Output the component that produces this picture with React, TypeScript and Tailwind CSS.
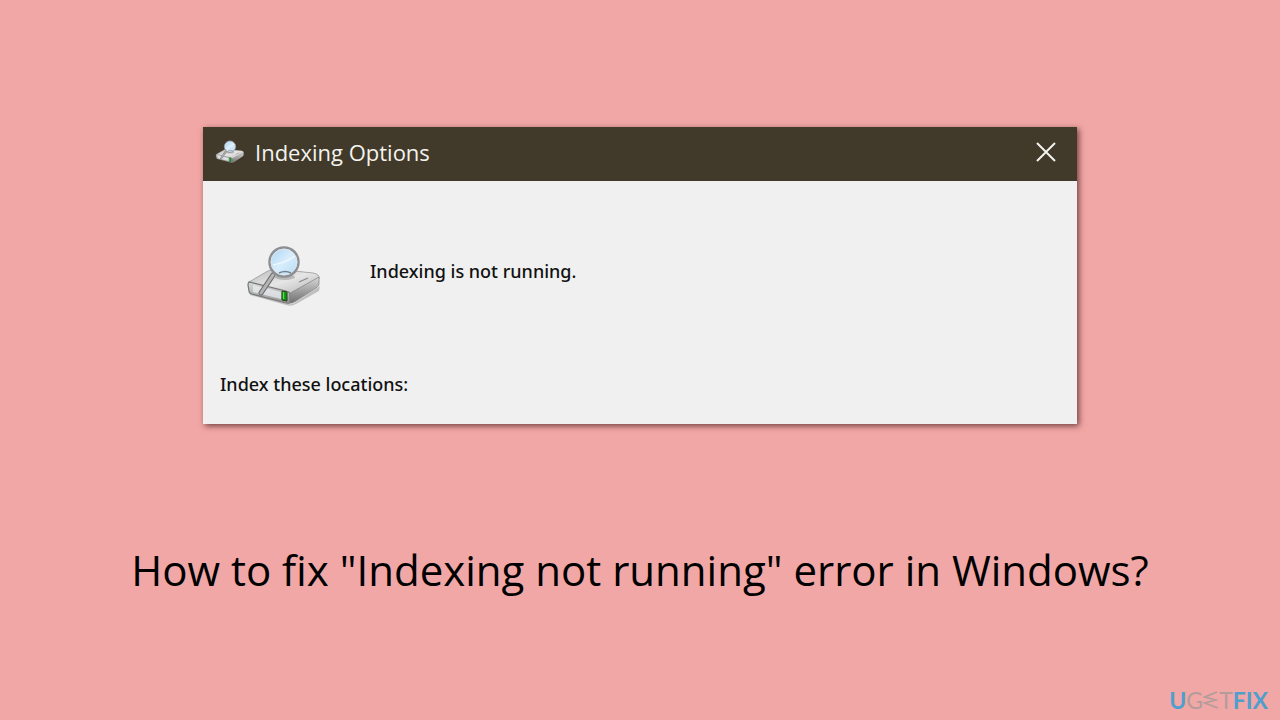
import { useState } from "react";

function DriveIcon({ className }: { className?: string }) {
  return (
    <svg viewBox="0 0 76 62" className={className} aria-hidden="true">
      <defs>
        <linearGradient id="driveTop" x1="0" y1="0" x2="1" y2="1">
          <stop offset="0" stopColor="#b9b9b9" />
          <stop offset="0.5" stopColor="#e6e6e6" />
          <stop offset="1" stopColor="#b4b4b4" />
        </linearGradient>
        <linearGradient id="driveFront" x1="0" y1="0" x2="0" y2="1">
          <stop offset="0" stopColor="#d9dcdd" />
          <stop offset="1" stopColor="#929292" />
        </linearGradient>
        <linearGradient id="driveSide" x1="0" y1="0" x2="0" y2="1">
          <stop offset="0" stopColor="#d8d8d8" />
          <stop offset="1" stopColor="#6f6f6f" />
        </linearGradient>
        <linearGradient id="lens" x1="0" y1="0" x2="1" y2="1">
          <stop offset="0" stopColor="#a9d3f3" />
          <stop offset="0.5" stopColor="#d7edfc" />
          <stop offset="1" stopColor="#b5daf5" />
        </linearGradient>
      </defs>
      {/* drive body */}
      <path d="M3 48 L42 59 Q46 60 50 57 L74 41 L73 46 L50 59 Q45 62 40 60 L4 50Z" fill="#000" opacity="0.2" />
      <path d="M3 37 L20 27 Q24 24 30 24 L67 28 Q74 29 73 34 L48 47 Q44 49 40 48 L5 40Z" fill="url(#driveTop)" stroke="#999" strokeWidth="0.8" />
      <path d="M3 37 Q2 38 2 40 L3 46 Q3 48 6 49 L40 58 Q44 59 44 56 L44 49 Q44 47 40 46Z" fill="url(#driveFront)" stroke="#757575" strokeWidth="1.2" />
      <path d="M44 49 Q45 47 48 46 L73 32 L73 39 Q73 41 70 43 L50 56 Q46 59 42 58 Q44 58 44 55Z" fill="url(#driveSide)" stroke="#888" strokeWidth="0.8" />
      <path d="M7 40 L35 47 L35 54 L7 47Z" fill="#e9eef1" opacity="0.75" />
      <path d="M53 37 L62 33" stroke="#8a8a8a" strokeWidth="1.2" />
      <path d="M36 46 L41 47 L41 56 L36 55Z" fill="#12910f" stroke="#24451f" strokeWidth="1" />
      <path d="M37.5 47 V54" stroke="#52e34a" strokeWidth="1.3" />
      {/* magnifier */}
      <ellipse cx="39" cy="32" rx="10" ry="3" fill="#777" opacity="0.4" />
      <path d="M27 30 L15 48" stroke="#6f6f6f" strokeWidth="5" strokeLinecap="round" />
      <path d="M27 30 L15 48" stroke="#b4b4b4" strokeWidth="3" strokeLinecap="round" />
      <circle cx="38" cy="17" r="14.5" fill="url(#lens)" stroke="#8b8f93" strokeWidth="2.5" />
      <circle cx="38" cy="17" r="13" fill="none" stroke="#dfe4e8" strokeWidth="1" />
      <path d="M27 20 Q39 18 49 11" fill="none" stroke="#fff" strokeWidth="1.5" opacity="0.7" />
      <path d="M33 28 Q39 25 45 28" fill="none" stroke="#738491" strokeWidth="1.5" />
    </svg>
  );
}

function Brand() {
  return (
    <a
      href="#"
      aria-label="UGETFIX"
      className="flex items-center font-['Lato',sans-serif] text-[23px] leading-6 text-[#b39c9b]"
    >
      <span className="font-bold text-[#4f9fce]">U</span>
      <span>G</span>
      <svg viewBox="0 0 16 18" className="h-[18px] w-4" fill="none" stroke="currentColor" strokeWidth="1.8" aria-hidden="true">
        <path d="M14 1 L2 6 L13 9 L2 12 L15 17" />
      </svg>
      <span>T</span>
      <span className="font-bold text-[#4f9fce]">FIX</span>
    </a>
  );
}

function IndexingDialog({ onClose }: { onClose: () => void }) {
  return (
    <section
      aria-label="Indexing Options"
      className="mx-auto w-full max-w-[874px] bg-[#f0f0f0] shadow-[2px_2px_6px_rgba(60,20,20,0.7)]"
    >
      <header className="flex h-[54px] items-center bg-[#413929] pr-4 pb-1 pl-3 text-[#f4f3ef]">
        <DriveIcon className="h-6 w-[30px]" />
        <h2 className="ml-[10px] flex-1 font-['Open_Sans',sans-serif] text-[22px] leading-8">Indexing Options</h2>
        <button type="button" aria-label="Close" onClick={onClose} className="flex size-[30px] items-center justify-center">
          <svg viewBox="0 0 20 20" className="size-5" stroke="currentColor" strokeWidth="2" aria-hidden="true">
            <path d="M1 1 L19 19 M19 1 L1 19" />
          </svg>
        </button>
      </header>
      <div className="px-[17px] pt-16 pb-6 font-['Noto_Sans',sans-serif] text-[18px] leading-8 font-medium text-[#111]">
        <div className="flex items-start gap-12 pl-[26px]">
          <DriveIcon className="h-[62px] w-[76px]" />
          <p className="pt-[10px]">Indexing is not running.</p>
        </div>
        <p className="mt-[61px]">Index these locations:</p>
      </div>
    </section>
  );
}

export default function App() {
  const [open, setOpen] = useState(true);

  return (
    <main className="flex min-h-screen flex-col bg-[#f1a7a6]">
      <div className="flex-1 px-8 pt-[127px]">
        {open && <IndexingDialog onClose={() => setOpen(false)} />}
        <h1 className="mt-[116px] text-center font-['Open_Sans',sans-serif] text-[42px] leading-[60px] text-black">
          How to fix "Indexing not running" error in Windows?
        </h1>
      </div>
      <footer className="flex justify-end px-3 pb-2">
        <Brand />
      </footer>
    </main>
  );
}
